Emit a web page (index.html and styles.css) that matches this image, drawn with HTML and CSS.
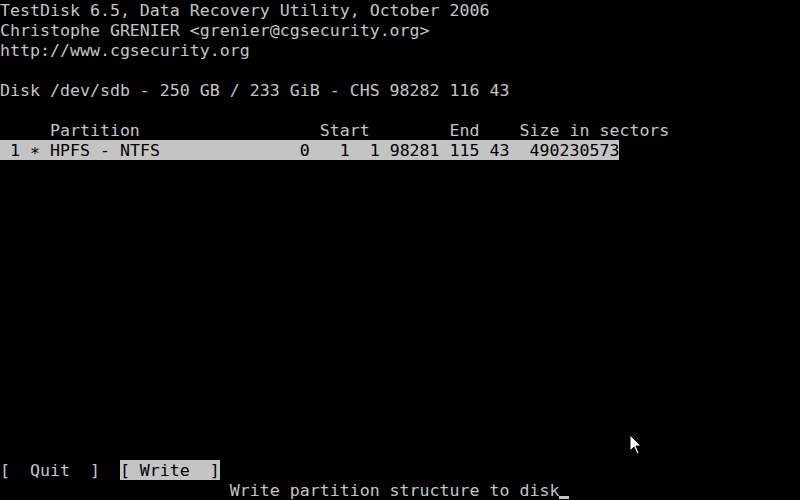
FILE: index.html
```html
<!DOCTYPE HTML>
<html>
<head>
<meta charset="utf-8">
<title>TestDisk</title>
<link rel="stylesheet" href="styles.css">
</head>
<body>
<div id="screen">
<div class="line">TestDisk 6.5, Data Recovery Utility, October 2006</div>
<div class="line">Christophe GRENIER &lt;grenier@cgsecurity.org&gt;</div>
<div class="line">http://www.cgsecurity.org</div>
<div class="line"> </div>
<div class="line">Disk /dev/sdb - 250 GB / 233 GiB - CHS 98282 116 43</div>
<div class="line"> </div>
<div class="line">     Partition                  Start        End    Size in sectors</div>
<div class="line"><span class="sel"> 1 <span class="star">*</span> HPFS - NTFS              0   1  1 98281 115 43  490230573</span></div>
<div class="blank"></div>
<div class="line">[  Quit  ]  <span class="sel">[ Write  ]</span></div>
<div class="line">                       Write partition structure to disk<span class="cursor"> </span></div>

<!-- mouse pointer -->
<svg class="pointer" width="14" height="22" viewBox="0 0 14 22">
    <path d="M1 1 L1 17 L5 13 L8 20 L10 19 L7 12 L12 12 Z" fill="#fff" stroke="#000" stroke-width="1"/>
</svg>
</div>
</body>
</html>
```

FILE: styles.css
```css
html,body{
   margin: 0px;
   padding: 0px;
   background: #000;
}
#screen{
   width: 800px;
   height: 500px;
   background: #000;
   color: #c4c4c4;
   font-family: "DejaVu Sans Mono", "Liberation Mono", monospace;
   font-size: 16.6px;
   display: flex;
   flex-direction: column;
   position: relative;
   overflow: hidden;
}
.line{
   height: 20px;
   line-height: 22px;
   white-space: pre;
}
.blank{
   flex: 1;
}
.sel{
   display: inline-block;
   height: 20px;
   vertical-align: top;
   background: #c4c4c4;
   color: #000;
}
.star{
   vertical-align: -3px;
   line-height: 1;
}
.cursor{
   display: inline-block;
   width: 10px;
   height: 20px;
   vertical-align: top;
   background: linear-gradient(to bottom, transparent 16px, #c4c4c4 16px, #c4c4c4 19px, transparent 19px);
}
.pointer{
   position: absolute;
   left: 629px;
   top: 434px;
}
```
